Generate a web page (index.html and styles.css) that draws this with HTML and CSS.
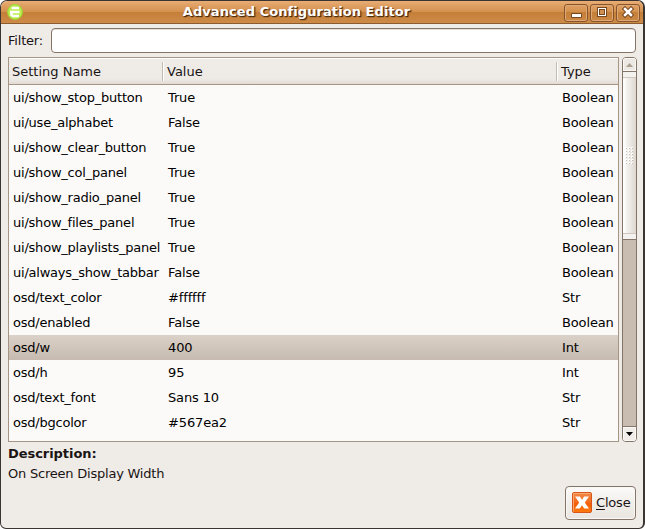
FILE: index.html
```
<!DOCTYPE html>
<html lang="en">
<head>
<meta charset="utf-8">
<title>Advanced Configuration Editor</title>
<link rel="stylesheet" href="styles.css">
</head>
<body>
<div class="window">
  <header class="titlebar">
    <svg class="app-icon" width="16" height="16" viewBox="0 0 16 16"><circle cx="8" cy="8" r="7.900" fill="#a0dc35"/><circle cx="8" cy="8" r="6.700" fill="#bdec55"/><path d="M4.500 4h7.500M3 8h9.500M4.500 12h7.500M4.500 8v4" fill="none" stroke="#fff" stroke-width="2.500"/></svg>
    <h1>Advanced Configuration Editor</h1>
    <div class="controls">
      <span class="ctl"><svg width="20" height="15" viewBox="0 0 20 15"><path d="M5.500 8.500h10v4h-10z" fill="#fff" stroke="#754a22"/></svg></span>
      <span class="ctl"><svg width="20" height="15" viewBox="0 0 20 15"><path d="M5 2h10v10H5z" fill="#754a22"/><path d="M6 3h8v8H6z" fill="#fff"/><path d="M7 4h6v6H7z" fill="#754a22"/><path d="M8 5h4v4H8z" fill="#d08f50"/></svg></span>
      <span class="ctl"><svg width="20" height="15" viewBox="0 0 20 15"><path d="M7 4l6 6m0-6l-6 6" stroke="#754a22" stroke-width="4.500" stroke-linecap="square"/><path d="M7 4l6 6m0-6l-6 6" stroke="#fff" stroke-width="2.500" stroke-linecap="square"/></svg></span>
    </div>
  </header>
  <main class="content">
    <label class="filter"><span>Filter:</span><input type="text"></label>
    <div class="list">
      <div class="table">
        <div class="row head"><span>Setting Name</span><span>Value</span><span>Type</span></div>
        <div class="row"><span>ui/show_stop_button</span><span>True</span><span>Boolean</span></div>
        <div class="row"><span>ui/use_alphabet</span><span>False</span><span>Boolean</span></div>
        <div class="row"><span>ui/show_clear_button</span><span>True</span><span>Boolean</span></div>
        <div class="row"><span>ui/show_col_panel</span><span>True</span><span>Boolean</span></div>
        <div class="row"><span>ui/show_radio_panel</span><span>True</span><span>Boolean</span></div>
        <div class="row"><span>ui/show_files_panel</span><span>True</span><span>Boolean</span></div>
        <div class="row"><span>ui/show_playlists_panel</span><span>True</span><span>Boolean</span></div>
        <div class="row"><span>ui/always_show_tabbar</span><span>False</span><span>Boolean</span></div>
        <div class="row"><span>osd/text_color</span><span>#ffffff</span><span>Str</span></div>
        <div class="row"><span>osd/enabled</span><span>False</span><span>Boolean</span></div>
        <div class="row selected"><span>osd/w</span><span>400</span><span>Int</span></div>
        <div class="row"><span>osd/h</span><span>95</span><span>Int</span></div>
        <div class="row"><span>osd/text_font</span><span>Sans 10</span><span>Str</span></div>
        <div class="row"><span>osd/bgcolor</span><span>#567ea2</span><span>Str</span></div>
      </div>
      <div class="scrollbar">
        <div class="step up"><svg width="7" height="4" viewBox="0 0 7 4"><path d="M0 4L3.500 0 7 4z" fill="#aca091"/></svg></div>
        <div class="thumb"><svg width="9" height="18" viewBox="0 0 9 18"><defs><pattern id="grip" width="3" height="3" patternUnits="userSpaceOnUse"><path d="M0 0h2v2H0z" fill="#fff"/><path d="M1 1h1v1H1z" fill="#c5bcb1"/></pattern></defs><path d="M0 0h9v18H0z" fill="url(#grip)"/></svg></div>
        <div class="step down"><svg width="7" height="4" viewBox="0 0 7 4"><path d="M0 0h7L3.500 4z" fill="#000"/></svg></div>
      </div>
    </div>
    <section class="description"><h2>Description:</h2><p>On Screen Display Width</p></section>
    <div class="actions">
      <button class="close"><svg width="22" height="22" viewBox="0 0 22 22"><defs><linearGradient id="orange" x2="0" y2="1"><stop offset="0" stop-color="#f08a48"/><stop offset=".5" stop-color="#f36a1c"/><stop offset=".55" stop-color="#f45e05"/><stop offset="1" stop-color="#ff7a10"/></linearGradient></defs><rect x="1.500" y=".5" width="19" height="20" rx="1.500" fill="url(#orange)" stroke="#d8561a"/><path d="M2.500 19.500v-18h17" fill="none" stroke="#f9a670"/><path d="M4 4.500h4.900L11 7.800l2.100-3.300H18l-4.200 6 4.200 6h-4.800L11 13.200l-2.200 3.300H4l4.200-6z" fill="#fff"/></svg><span><u>C</u>lose</span></button>
    </div>
  </main>
</div>
</body>
</html>
```
FILE: styles.css
```
* { box-sizing: border-box; }
body { margin: 0; background: #fff; color: #1a1414; font: 13px/20px "DejaVu Sans", sans-serif; }
.window { width: 645px; height: 529px; border: 1px solid #3a3532; border-right-width: 2px; border-radius: 7px 7px 6px 6px; background: #efebe7; overflow: hidden; }
.titlebar { display: flex; align-items: center; height: 23px; padding: 0 3px 0 6px; border-bottom: 1px solid #8c5c30; background: linear-gradient(#e9ad74 0, #dfa064 20%, #d5924f 48%, #c57f38 52%, #cd8b48 100%); }
.app-icon { flex: none; }
.titlebar h1 { flex: 1; margin: 0; padding-left: 6px; text-align: center; color: #fff; font-size: 13px; line-height: 22px; letter-spacing: .07px; text-shadow: 1px 1px 1px #4d2e12, 1px 1px 1px #4d2e12; }
.controls { display: flex; gap: 2px; }
.ctl { display: flex; align-items: center; justify-content: center; width: 24px; height: 18px; margin-top: 1px; border: 1px solid #875529; border-radius: 3px; box-shadow: inset 0 0 0 1px #e0a874; }
.content { padding: 4px 6px 0 7px; }
.filter { display: flex; align-items: center; height: 26px; }
.filter span { width: 43px; letter-spacing: -.2px; }
.filter input { flex: 1; height: 25px; margin: 0 1px 1px 0; padding: 2px 5px; border: 1px solid #857568; border-radius: 4px; background: #fff; box-shadow: inset 0 1px #e4ded8; font: inherit; outline: 0; }
.list { display: flex; gap: 3px; height: 385px; margin-top: 3px; }
.table { width: 611px; border: 1px solid #a59585; background: #fbfaf8; overflow: hidden; color: #000; }
.row { display: grid; grid-template-columns: 154px 394px 1fr; height: 25px; line-height: 25px; white-space: nowrap; letter-spacing: -.14px; }
.row span { padding-left: 4px; }
.row span:first-child { letter-spacing: -.22px; }
.row span + span { padding-left: 5px; }
.row.head { height: 27px; line-height: 27px; color: #1a1414; background: linear-gradient(#fff 0 1px, #efebe7 1px, #eeebe6 80%, #e2dbd4 100%); border-bottom: 1px solid #a59585; letter-spacing: 0; }
.row.head span { padding-left: 3px; letter-spacing: 0; }
.row.head span + span { position: relative; padding-left: 4px; }
.head span + span::before { content: ""; position: absolute; left: -1px; top: 4px; width: 2px; height: 19px; background: linear-gradient(90deg, #c3bbb2 50%, #fff 50%); }
.row.selected { background: linear-gradient(#dad1c8, #c7bbaf); }
.scrollbar { display: flex; flex-direction: column; width: 15px; border: 1px solid #857568; border-radius: 4px; background: #c9bdb2; overflow: hidden; }
.step { display: flex; align-items: center; justify-content: center; flex: none; height: 14px; background: #f1eeea; box-shadow: inset 0 0 0 1px #fbfaf8; }
.up { height: 13px; background: #ece8e3; }
.thumb { display: flex; align-items: center; justify-content: center; height: 169px; border: solid #857568; border-width: 1px 0; background: linear-gradient(#f4f2ef 0 5px, #d0c8c0 5px 6px, transparent 6px 161px, #d0c8c0 161px 162px, #f4f2ef 162px), linear-gradient(90deg, #fff 0 1px, #f6f4f1 3px, #ddd7d0); }
.down { margin-top: auto; border-top: 1px solid #857568; height: 15px; }
.description { height: 44px; padding-top: 2px; }
.description h2 { margin: 0; font-size: 13px; line-height: 20px; letter-spacing: -.05px; }
.description p { margin: 0; line-height: 20px; letter-spacing: -.22px; }
.actions { display: flex; justify-content: flex-end; padding-right: 1px; }
.close { display: flex; align-items: center; gap: 3px; width: 71px; height: 34px; padding: 0 0 0 5px; border: 1px solid #857568; border-radius: 4px; background: linear-gradient(#fcfbfa, #f1eeea 50%, #eae5e0); box-shadow: inset 0 0 0 1px #faf8f6; color: #1a1414; font: inherit; letter-spacing: -.2px; }
.close u { text-underline-offset: 2px; }
```
